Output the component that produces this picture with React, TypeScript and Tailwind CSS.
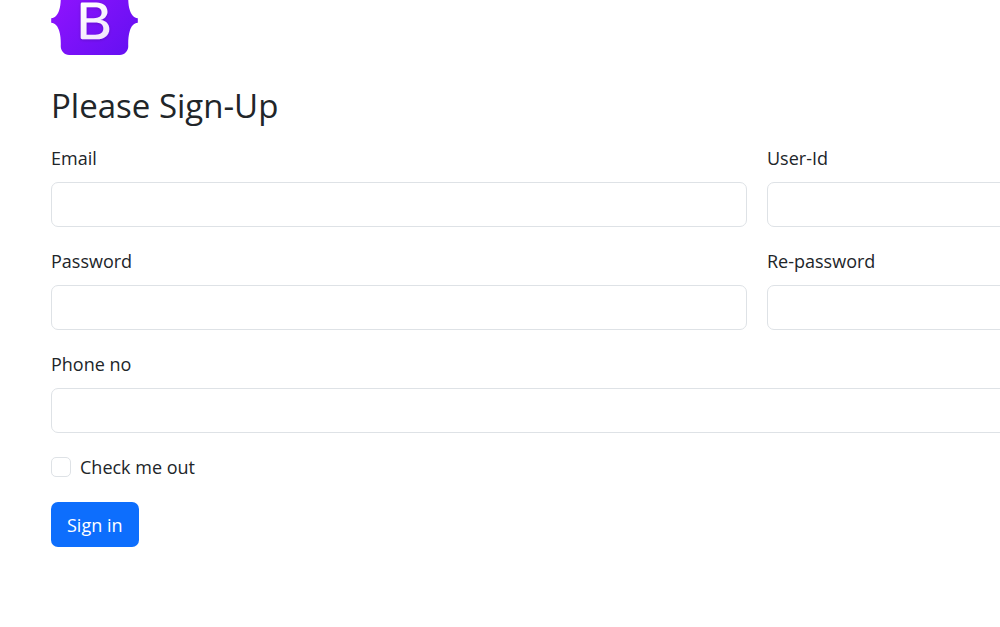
import React from "react";

type FieldProps = {
  id: string;
  label: string;
  type: string;
  className?: string;
};

function Field({ id, label, type, className = "" }: FieldProps) {
  return (
    <div className={className}>
      <label htmlFor={id} className="mb-[10px] block">
        {label}
      </label>
      <input
        id={id}
        type={type}
        className="block h-[45px] w-full rounded-[7px] border border-[#dee2e6] bg-white px-[14px] outline-none focus:border-[#86b7fe]"
      />
    </div>
  );
}

function Logo() {
  return (
    <svg
      viewBox="0 0 118 94"
      className="-mt-[14px] mb-[30px] block h-[69px] w-[87px]"
      role="img"
      aria-label="Bootstrap"
    >
      <defs>
        <linearGradient id="shell" x1="12" y1="2" x2="106" y2="92" gradientUnits="userSpaceOnUse">
          <stop stopColor="#9013fe" />
          <stop offset="1" stopColor="#6610f2" />
        </linearGradient>
        <linearGradient id="letter" x1="42" y1="22" x2="74" y2="72" gradientUnits="userSpaceOnUse">
          <stop stopColor="#ffffff" />
          <stop offset="1" stopColor="#f1e5fc" />
        </linearGradient>
        <filter id="shade" x="-20%" y="-20%" width="140%" height="140%">
          <feDropShadow dx="0" dy="1" stdDeviation="2" floodColor="#000000" floodOpacity="0.2" />
        </filter>
      </defs>
      <path
        fill="url(#shell)"
        d="M24.509 0c-6.733 0-11.715 5.893-11.492 12.284.214 6.14-.064 14.092-2.066 20.577C8.943 39.365 5.547 43.485 0 44.014v5.972c5.547.529 8.943 4.649 10.951 11.153 2.002 6.485 2.28 14.437 2.066 20.577C12.794 88.106 17.776 94 24.51 94H93.5c6.733 0 11.714-5.893 11.491-12.284-.214-6.14.064-14.092 2.066-20.577 2.009-6.504 5.396-10.624 10.943-11.153v-5.972c-5.547-.529-8.934-4.649-10.943-11.153-2.002-6.484-2.28-14.437-2.066-20.577C105.214 5.894 100.233 0 93.5 0H24.508z"
      />
      <path
        fill="url(#letter)"
        fillRule="evenodd"
        filter="url(#shade)"
        d="M79.2 58.463C79.2 67.263 72.636 72.6 61.743 72.6H42.2a2 2 0 01-2-2V24.6a2 2 0 012-2h19.437c9.083 0 15.044 4.92 15.044 12.474 0 5.302-4.01 10.049-9.119 10.88v.277C74.517 46.994 79.2 51.81 79.2 58.463zM59.721 28.94H48.148v14.934h9.905c6.884 0 10.68-2.772 10.68-7.727 0-4.643-3.264-7.207-9.012-7.207zM48.148 49.8v16.458H60.11c7.167 0 10.964-2.876 10.964-8.281 0-5.406-3.903-8.178-11.425-8.178H48.148z"
      />
    </svg>
  );
}

export default function App() {
  return (
    <main className="min-h-screen overflow-hidden bg-white px-[51px] pb-20 font-['Open_Sans','Noto_Sans',sans-serif] text-[18px] leading-[28px] text-[#212529]">
      <form className="min-w-[1412px]" onSubmit={(e) => e.preventDefault()}>
        <Logo />
        <h1 className="mb-[17px] text-[33px] leading-[42px]">Please Sign-Up</h1>
        <div className="grid grid-cols-2 gap-5">
          <Field id="email" label="Email" type="email" />
          <Field id="user-id" label="User-Id" type="text" />
          <Field id="password" label="Password" type="password" />
          <Field id="re-password" label="Re-password" type="password" />
          <Field id="phone" label="Phone no" type="tel" className="col-span-2" />
          <div className="col-span-2 flex items-center gap-[9px] pb-px">
            <input
              id="check"
              type="checkbox"
              className="size-5 appearance-none rounded-[5px] border border-[#dee2e6] bg-white checked:border-[#0d6efd] checked:bg-[#0d6efd]"
            />
            <label htmlFor="check">Check me out</label>
          </div>
          <div className="col-span-2">
            <button
              type="submit"
              className="h-[45px] rounded-[7px] bg-[#0d6efd] px-4 text-white hover:bg-[#0b5ed7]"
            >
              Sign in
            </button>
          </div>
        </div>
      </form>
    </main>
  );
}
